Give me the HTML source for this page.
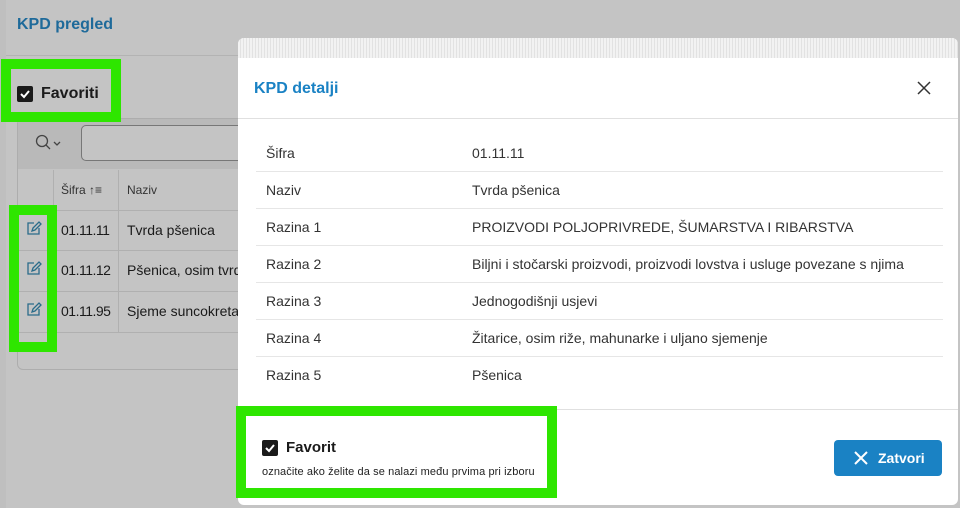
<!DOCTYPE html>
<html><head><meta charset="utf-8"><style>
*{box-sizing:border-box;margin:0;padding:0}
body{width:960px;height:508px;overflow:hidden;background:#bfbfbf;font-family:"Liberation Sans",sans-serif;position:relative;color:#1a1a1a}
.abs{position:absolute}
.green{position:absolute;border:10px solid #2ee600}
</style></head><body>
<div class="abs" style="left:6px;top:0;width:954px;height:508px;background:#c4c4c4"></div>
<div class="abs" style="left:17px;top:16px;font-size:16px;font-weight:bold;color:#1e6a9a">KPD pregled</div>
<div class="abs" style="left:6px;top:55px;width:240px;height:1px;background:#b3b3b3"></div>
<div class="abs" style="left:17px;top:118px;width:230px;height:252px;border:1px solid #adadad;border-radius:6px;background:#c4c4c4"></div>
<div class="abs" style="left:18px;top:119px;width:229px;height:50px;background:#b9b9b9"></div>
<svg class="abs" style="left:34px;top:134px" width="30" height="18"><circle cx="8" cy="7" r="5.5" fill="none" stroke="#444" stroke-width="1.3"/><path d="M12 11l4 4M20 8l3 3 3-3" stroke="#444" stroke-width="1.3" fill="none"/></svg>
<div class="abs" style="left:81px;top:125px;width:170px;height:36px;border:1px solid #777;border-radius:5px;background:#c4c4c4"></div>
<div class="abs" style="left:53px;top:170px;width:1px;height:162px;background:#b0b0b0"></div>
<div class="abs" style="left:118px;top:170px;width:1px;height:162px;background:#b0b0b0"></div>
<div class="abs" style="left:18px;top:210px;width:229px;height:1px;background:#b0b0b0"></div>
<div class="abs" style="left:18px;top:250px;width:229px;height:1px;background:#b0b0b0"></div>
<div class="abs" style="left:18px;top:291px;width:229px;height:1px;background:#b0b0b0"></div>
<div class="abs" style="left:18px;top:332px;width:229px;height:1px;background:#b0b0b0"></div>
<div class="abs" style="left:61px;top:183px;font-size:12px;color:#333">Šifra ↑≡</div>
<div class="abs" style="left:127px;top:183px;font-size:12px;color:#333">Naziv</div>
<div class="abs" style="left:61px;top:222px;font-size:14px;letter-spacing:-0.5px">01.11.11</div>
<div class="abs" style="left:127px;top:222px;font-size:14px">Tvrda pšenica</div>
<div class="abs" style="left:61px;top:262px;font-size:14px;letter-spacing:-0.5px">01.11.12</div>
<div class="abs" style="left:127px;top:262px;font-size:14px;white-space:nowrap">Pšenica, osim tvrd</div>
<div class="abs" style="left:61px;top:303px;font-size:14px;letter-spacing:-0.5px">01.11.95</div>
<div class="abs" style="left:127px;top:303px;font-size:14px;white-space:nowrap">Sjeme suncokreta</div>
<svg class="abs" style="left:26px;top:221px" width="16" height="100"><g fill="none" stroke="#2a6c8a" stroke-width="1.3"><path d="M8 2H2v11h11V7M6 10l1-3 6-6 2 2-6 6z"/><path transform="translate(0,40)" d="M8 2H2v11h11V7M6 10l1-3 6-6 2 2-6 6z"/><path transform="translate(0,81)" d="M8 2H2v11h11V7M6 10l1-3 6-6 2 2-6 6z"/></g></svg>
<div class="green" style="left:9px;top:205px;width:48px;height:147px"></div>
<div class="green" style="left:1px;top:59px;width:120px;height:63px;background:#c4c4c4"></div>
<div class="abs" style="left:17px;top:86px;width:16px;height:16px;background:#1a1a1a;border-radius:2px"></div>
<svg class="abs" style="left:17px;top:86px" width="16" height="16"><path d="M4 8l3 3 5-6" stroke="#fff" stroke-width="2" fill="none"/></svg>
<div class="abs" style="left:41px;top:85px;font-size:16px;font-weight:bold">Favoriti</div>
<div class="abs" style="left:238px;top:38px;width:720px;height:467px;background:#fff;border-radius:6px;overflow:hidden">
<div style="height:20px;background:repeating-linear-gradient(90deg,#f2f2f2 0 2px,#e2e2e2 2px 3px)"></div>
<div class="abs" style="left:16px;top:42px;font-size:16px;font-weight:bold;color:#1a82c4">KPD detalji</div>
<svg class="abs" style="left:678px;top:42px" width="16" height="16"><path d="M2 2l12 12M14 2L2 14" stroke="#333" stroke-width="1.5"/></svg>
<div class="abs" style="left:0;top:80px;width:720px;height:1px;background:#e0e0e0"></div>
<div class="abs" style="left:18px;top:97px;width:687px;font-size:14px;color:#333">
<div style="height:37px;line-height:37px;border-bottom:1px solid #e6e6e6;padding-left:10px"><span style="display:inline-block;width:206px">Šifra</span>01.11.11</div>
<div style="height:37px;line-height:37px;border-bottom:1px solid #e6e6e6;padding-left:10px"><span style="display:inline-block;width:206px">Naziv</span>Tvrda pšenica</div>
<div style="height:37px;line-height:37px;border-bottom:1px solid #e6e6e6;padding-left:10px"><span style="display:inline-block;width:206px">Razina 1</span>PROIZVODI POLJOPRIVREDE, ŠUMARSTVA I RIBARSTVA</div>
<div style="height:37px;line-height:37px;border-bottom:1px solid #e6e6e6;padding-left:10px"><span style="display:inline-block;width:206px">Razina 2</span>Biljni i stočarski proizvodi, proizvodi lovstva i usluge povezane s njima</div>
<div style="height:37px;line-height:37px;border-bottom:1px solid #e6e6e6;padding-left:10px"><span style="display:inline-block;width:206px">Razina 3</span>Jednogodišnji usjevi</div>
<div style="height:37px;line-height:37px;border-bottom:1px solid #e6e6e6;padding-left:10px"><span style="display:inline-block;width:206px">Razina 4</span>Žitarice, osim riže, mahunarke i uljano sjemenje</div>
<div style="height:37px;line-height:37px;padding-left:10px"><span style="display:inline-block;width:206px">Razina 5</span>Pšenica</div>
</div>
<div class="abs" style="left:0;top:371px;width:720px;height:1px;background:#e0e0e0"></div>
<div class="abs" style="left:596px;top:402px;width:108px;height:36px;background:#1a82c4;border-radius:4px;color:#fff;font-weight:bold;font-size:14px;line-height:36px;padding-left:44px">Zatvori</div>
<svg class="abs" style="left:616px;top:413px" width="14" height="14"><path d="M1 1l12 12M13 1L1 13" stroke="#fff" stroke-width="2"/></svg>
</div>
<div class="green" style="left:236px;top:406px;width:321px;height:92px;background:#fff"></div>
<div class="abs" style="left:262px;top:440px;width:16px;height:16px;background:#1a1a1a;border-radius:2px"></div>
<svg class="abs" style="left:262px;top:440px" width="16" height="16"><path d="M4 8l3 3 5-6" stroke="#fff" stroke-width="2" fill="none"/></svg>
<div class="abs" style="left:286px;top:439px;font-size:15px;font-weight:bold">Favorit</div>
<div class="abs" style="left:262px;top:466px;font-size:11px;color:#222;letter-spacing:0.1px">označite ako želite da se nalazi među prvima pri izboru</div>
</body></html>
